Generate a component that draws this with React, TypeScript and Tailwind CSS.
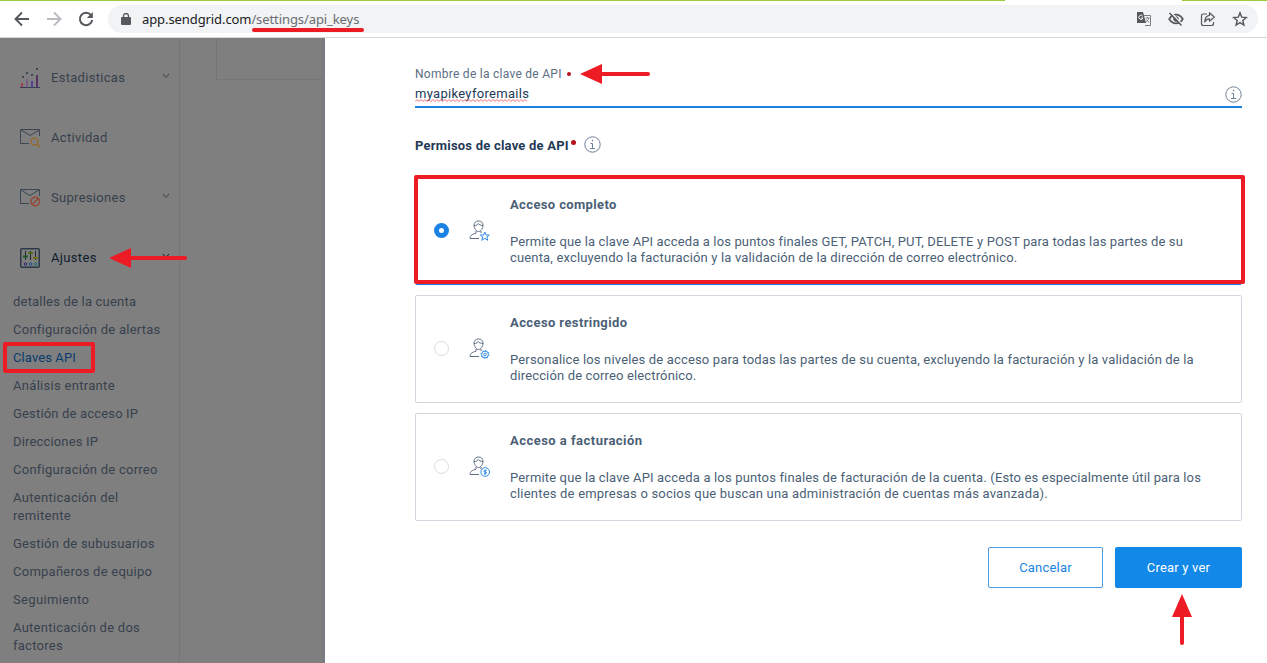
import React from "react";

type LineProps = { text: string; className?: string };

function Line({ text, className = "" }: LineProps) {
  return <span className={`block w-fit whitespace-nowrap ${className}`}>{text}</span>;
}

function Chevron({ dark = false }: { dark?: boolean }) {
  return (
    <svg className="mb-[5px] ml-auto mr-[9px]" width="8" height="6" viewBox="0 0 8 6" fill="none" stroke={dark ? "#0e1d2d" : "#37414d"}>
      <path d="M1 1 4 4.500 7 1" />
    </svg>
  );
}

function StatsIcon() {
  return (
    <svg width="20" height="22" viewBox="0 0 20 22">
      <path d="M0 20.500h20" stroke="#3b3f55" />
      <path d="M2 20v-4" stroke="#9b3f58" strokeWidth="2" />
      <path d="M7 20v-8" stroke="#7a5f86" strokeWidth="2" />
      <path d="M12 20v-6" stroke="#53409b" strokeWidth="2" />
      <path d="M17 20V8" stroke="#553366" strokeWidth="2" />
      <path d="M2 9h2v2H2zM6 5h2v2H6zM11 7h2v2h-2zM16 1h2v2h-2z" fill="#3f4650" />
    </svg>
  );
}

function MailIcon({ kind }: { kind: "search" | "block" }) {
  return (
    <svg width="21" height="20" viewBox="0 0 21 20" fill="none">
      <path d="M9 15.500H.5V1.500h19V8M1 2l9 5.500L19 2" stroke="#3b4653" />
      {kind === "search" ? (
        <g stroke="#96692a" strokeWidth="1.400">
          <circle cx="14.500" cy="13.500" r="3.600" />
          <path d="m17.200 16.200 3 3" />
        </g>
      ) : (
        <g stroke="#994534" strokeWidth="1.400">
          <circle cx="15.300" cy="13.500" r="4.300" />
          <path d="m12.300 16.500 6-6" />
        </g>
      )}
    </svg>
  );
}

function SettingsIcon() {
  return (
    <svg width="20" height="20" viewBox="0 0 20 20" fill="none">
      <rect x=".75" y=".75" width="18.500" height="18.500" rx="1" stroke="#2b3948" strokeWidth="1.500" />
      <path d="M5.500 3v9M10.500 3v9M15.500 3v9" stroke="#1a2733" />
      <path d="M3 8.500h5" stroke="#1d5c24" strokeWidth="2" />
      <path d="M8 5h5" stroke="#4d6a10" strokeWidth="2" />
      <path d="M13 10h5" stroke="#6b7410" strokeWidth="2" />
      <circle cx="5.500" cy="16" r="1.300" stroke="#29246e" />
      <circle cx="10.500" cy="16" r="1.300" stroke="#1d4f86" />
      <circle cx="15.500" cy="16" r="1.300" stroke="#12707a" />
    </svg>
  );
}

function NavRow({ icon, label, chevron, dark, track }: { icon: React.ReactNode; label: string; chevron?: boolean; dark?: boolean; track: string }) {
  return (
    <div className={`flex h-[60px] items-center pl-5 ${dark ? "text-[#0e1d2d]" : "text-[#37414d]"}`}>
      <span className="flex w-[31px] items-center">{icon}</span>
      <Line text={label} className={track} />
      {chevron && <Chevron dark={dark} />}
    </div>
  );
}

const subLinks: { lines: string[]; track: string }[] = [
  { lines: ["detalles de la cuenta"], track: "tracking-[0.2px]" },
  { lines: ["Configuración de alertas"], track: "tracking-[0.25px]" },
  { lines: ["Claves API"], track: "tracking-[0.1px]" },
  { lines: ["Análisis entrante"], track: "tracking-[0.3px]" },
  { lines: ["Gestión de acceso IP"], track: "tracking-[0.17px]" },
  { lines: ["Direcciones IP"], track: "tracking-[0.16px]" },
  { lines: ["Configuración de correo"], track: "tracking-[0.25px]" },
  { lines: ["Autenticación del", "remitente"], track: "tracking-[0.3px]" },
  { lines: ["Gestión de subusuarios"], track: "tracking-[0.25px]" },
  { lines: ["Compañeros de equipo"], track: "tracking-[0.25px]" },
  { lines: ["Seguimiento"], track: "tracking-[0.35px]" },
  { lines: ["Autenticación de dos", "factores"], track: "tracking-[0.26px]" },
];

function Sidebar() {
  return (
    <nav className="h-full w-[180px] shrink-0 border-r border-[#757678] pt-[10px] text-[13px]">
      <NavRow icon={<StatsIcon />} label="Estadisticas" chevron track="tracking-[0.3px]" />
      <NavRow icon={<MailIcon kind="search" />} label="Actividad" track="tracking-[0.3px]" />
      <NavRow icon={<MailIcon kind="block" />} label="Supresiones" chevron track="tracking-[0.3px]" />
      <NavRow icon={<SettingsIcon />} label="Ajustes" chevron dark track="tracking-[0.35px]" />
      <ul className="pl-[13px] text-[#37414d]">
        {subLinks.map((l) => {
          const active = l.lines[0] === "Claves API";
          return (
            <li key={l.lines[0]} className={`relative py-[5px] leading-[18px] ${active ? "text-[#0b3c6e]" : ""}`}>
              {l.lines.map((t) => (
                <Line key={t} text={t} className={l.track} />
              ))}
              {active && <span className="absolute -left-[10px] -top-[2px] h-[31px] w-[92px] rounded-[2px] border-4 border-[#ed1c24]" />}
            </li>
          );
        })}
      </ul>
    </nav>
  );
}

function InfoIcon() {
  return (
    <svg width="17" height="17" viewBox="0 0 17 17" fill="none" stroke="#6d7f95">
      <circle cx="8.500" cy="8.500" r="7.700" />
      <path d="M6.500 7.500h2v5M6 12.500h5" />
      <path d="M8 4.500h1.200" strokeWidth="1.400" />
    </svg>
  );
}

function UserIcon({ badge }: { badge: "star" | "gear" | "coin" }) {
  return (
    <svg width="22" height="22" viewBox="0 0 22 22" fill="none" stroke="#5e6f84">
      <path d="M9.500 1C6.800 1 5 2.700 5 5.300s2 6.200 4.500 6.200S14 8 14 5.300 12.200 1 9.500 1Z" />
      <path d="M5 5.500c2.500.2 3.600-.8 4.200-2 .8 1.300 2.600 1.900 4.800 2M7 11v2.200c-3 .8-6 2-6 5.300h9M12 11v2" />
      {badge === "star" && <path stroke="#2f8be6" d="m15.800 12 1.300 3h3.200l-2.500 2 1 3.300-3-1.900-3 1.900 1-3.300-2.500-2h3.200z" />}
      {badge === "gear" && (
        <g stroke="#2f8be6">
          <circle cx="16" cy="16.500" r="3.400" />
          <circle cx="16" cy="16.500" r="1.300" />
          <circle cx="16" cy="16.500" r="4" strokeDasharray="1.200 1.900" />
        </g>
      )}
      {badge === "coin" && (
        <g stroke="#2f8be6">
          <circle cx="16.200" cy="16" r="4.300" />
          <path d="M17.700 14.500h-2.200c-.8 0-.8 1.500 0 1.500h1.300c.8 0 .8 1.600 0 1.600h-2M16.200 13.500v5.200" />
        </g>
      )}
    </svg>
  );
}

type Option = { title: string; titleTrack: string; badge: "star" | "gear" | "coin"; lines: { t: string; track: string }[] };

const options: Option[] = [
  {
    title: "Acceso completo",
    titleTrack: "tracking-[0.37px]",
    badge: "star",
    lines: [
      { t: "Permite que la clave API acceda a los puntos finales GET, PATCH, PUT, DELETE y POST para todas las partes de su", track: "tracking-[0.137px]" },
      { t: "cuenta, excluyendo la facturación y la validación de la dirección de correo electrónico.", track: "tracking-[0.16px]" },
    ],
  },
  {
    title: "Acceso restringido",
    titleTrack: "tracking-[0.4px]",
    badge: "gear",
    lines: [
      { t: "Personalice los niveles de acceso para todas las partes de su cuenta, excluyendo la facturación y la validación de la", track: "tracking-[0.16px]" },
      { t: "dirección de correo electrónico.", track: "tracking-[0.14px]" },
    ],
  },
  {
    title: "Acceso a facturación",
    titleTrack: "tracking-[0.47px]",
    badge: "coin",
    lines: [
      { t: "Permite que la clave API acceda a los puntos finales de facturación de la cuenta. (Esto es especialmente útil para los", track: "tracking-[0.157px]" },
      { t: "clientes de empresas o socios que buscan una administración de cuentas más avanzada).", track: "tracking-[0.2px]" },
    ],
  },
];

function OptionCard({ option, selected }: { option: Option; selected: boolean }) {
  return (
    <div className={`relative flex h-[108px] items-center rounded-[2px] border pl-[18px] text-[#4b5f76] ${selected ? "border-[#1a82e2]" : "border-[#d3d6de]"}`}>
      {selected ? (
        <span className="mb-px size-[15px] shrink-0 rounded-full border-[5px] border-[#1a82e2] bg-white" />
      ) : (
        <span className="mb-px size-[15px] shrink-0 rounded-full border border-[#d9dce1] bg-white" />
      )}
      <span className="ml-5 w-[41px] shrink-0">
        <UserIcon badge={option.badge} />
      </span>
      <div className="h-full pt-[18px] text-[13px]">
        <Line text={option.title} className={`mb-[20px] font-bold leading-[18px] ${option.titleTrack}`} />
        {option.lines.map((l) => (
          <Line key={l.t} text={l.t} className={`leading-4 ${l.track}`} />
        ))}
      </div>
      {selected && <span className="absolute -left-[2px] -top-[3px] h-[109px] w-[831px] rounded-[2px] border-4 border-[#ed1c24]" />}
    </div>
  );
}

function Arrow({ className, w }: { className: string; w: number }) {
  return (
    <svg className={`absolute ${className}`} width={w} height="20" viewBox={`0 0 ${w} 20`}>
      <path d="M0 10 22 0v20z" fill="#ed1c24" />
      <path d={`M20 10H${w - 2}`} stroke="#ed1c24" strokeWidth="4" strokeLinecap="round" />
    </svg>
  );
}

function BrowserBar() {
  return (
    <header className="relative flex h-[38px] shrink-0 items-center border-b border-[#d5d7da] bg-white">
      <div className="absolute inset-x-0 top-0 flex h-px justify-between">
        <span className="w-[1005px] bg-[#9acb3c]" />
        <span className="w-[85px] bg-[#9acb3c]" />
      </div>
      <div className="flex items-center pl-[14px]">
        <svg width="16" height="16" viewBox="0 0 16 16" fill="none" stroke="#54575c" strokeWidth="1.900">
          <path d="M15 8H2M8 1.500 1.500 8 8 14.500" />
        </svg>
        <svg className="ml-4" width="16" height="16" viewBox="0 0 16 16" fill="none" stroke="#b9bbbe" strokeWidth="1.900">
          <path d="M1 8h13M8 1.500 14.500 8 8 14.500" />
        </svg>
        <svg className="ml-4" width="16" height="16" viewBox="0 0 16 16" fill="none" stroke="#54575c" strokeWidth="2">
          <path d="M13 4.200A6.200 6.200 0 1 0 14.200 9" />
          <path d="M14.800 1v6H8.800z" fill="#54575c" stroke="none" />
        </svg>
      </div>
      <div className="ml-[14px] flex h-7 w-[1150px] items-center rounded-full bg-[#f1f3f4] pl-[13px] pr-[10px]">
        <svg width="10" height="12" viewBox="0 0 10 12">
          <path d="M1 4h8a1 1 0 0 1 1 1v6a1 1 0 0 1-1 1H1a1 1 0 0 1-1-1V5a1 1 0 0 1 1-1Z" fill="#54575c" />
          <path d="M2.500 5V3a2.500 2.500 0 0 1 5 0v2" fill="none" stroke="#54575c" strokeWidth="1.300" />
        </svg>
        <div className="ml-[11px] flex pt-px font-['Noto_Sans','Open_Sans',sans-serif] text-[13px] leading-5 tracking-[-0.09px]">
          <Line text="app.sendgrid.com" className="text-[#202124]" />
          <Line text="/settings/api_keys" className="text-[#6a6d72]" />
        </div>
        <div className="ml-auto flex items-center gap-4">
          <svg width="16" height="16" viewBox="0 0 16 16">
            <path d="M6 4.500h8.500v10H9" fill="none" stroke="#7b7e83" />
            <path d="M1 1h6l3 11H1z" fill="#54575c" />
            <path d="M6.800 5.200A2.100 2.100 0 1 0 7 7H5" fill="none" stroke="#fff" />
            <path d="M9.500 7h4M11.500 6v1M12.800 7c-.5 2-1.500 3-3 4M10.500 8.500l2.500 3" fill="none" stroke="#7b7e83" strokeWidth=".9" />
          </svg>
          <svg width="16" height="16" viewBox="0 0 16 16" fill="none" stroke="#54575c">
            <path d="M1.200 8C3 5 5.300 3.700 8 3.700S13 5 14.800 8C13 11 10.700 12.300 8 12.300S3 11 1.200 8Z" strokeWidth="1.700" />
            <circle cx="8" cy="8" r="2.300" fill="#54575c" />
            <path d="m2.700 1 11.800 13" stroke="#f1f3f4" strokeWidth="1.500" />
            <path d="m1.500 2 12 12.500" strokeWidth="1.500" />
          </svg>
          <svg width="16" height="16" viewBox="0 0 16 16" fill="none" stroke="#54575c" strokeWidth="1.200">
            <path d="M7 3H3.500Q1.500 3 1.500 5v7.500q0 2 2 2h8q2 0 2-2V11" />
            <path d="M9.500 1.800 14.300 6l-4.800 4.200V7.800C7 7.800 5.700 8.800 4.700 11c.2-3.500 1.800-6.200 4.800-6.600z" strokeLinejoin="round" />
          </svg>
          <svg width="16" height="16" viewBox="0 0 16 16" fill="none" stroke="#54575c" strokeWidth="1.400">
            <path d="m8 1.800 1.700 4.300 4.600.4-3.500 3 1.100 4.500L8 11.600 4.100 14l1.100-4.500-3.500-3 4.600-.4z" />
          </svg>
        </div>
      </div>
      <span className="absolute left-[252px] top-7 h-[4px] w-[112px] rounded-full bg-[#ed1c24]" />
    </header>
  );
}

const squiggle = "M0 2.500" + Array.from({ length: 28 }, () => "l2-2l2 2").join("");

function KeyForm() {
  return (
    <main className="relative flex w-[942px] shrink-0 flex-col bg-white pl-[90px] pr-[25px] pt-[27px]">
      <div className="flex items-center text-[12px] leading-[18px] text-[#5b6e84]">
        <Line text="Nombre de la clave de API" className="tracking-[0.27px]" />
        <span className="ml-[5px] size-1 rounded-full bg-[#b5121b]" />
      </div>
      <div className="flex h-[25px] items-start justify-between border-b-2 border-[#1a82e2]">
        <div className="relative pt-px">
          <Line text="myapikeyforemails" className="text-[13px] leading-[20px] tracking-[0.3px] text-[#1f3a56]" />
          <svg className="absolute left-0 top-[16px]" width="114" height="3" viewBox="0 0 114 3" fill="none" stroke="#ef5a62" strokeWidth="0.900">
            <path d={squiggle} />
          </svg>
        </div>
        <span className="mt-[3px]">
          <InfoIcon />
        </span>
      </div>
      <div className="mt-7 flex h-[18px] items-center">
        <Line text="Permisos de clave de API" className="pt-[2px] text-[13px] font-bold leading-[18px] tracking-[0.22px] text-[#1f3a56]" />
        <span className="mb-[6px] ml-[2px] size-[5px] rounded-full bg-[#b5121b]" />
        <span className="mb-[2px] ml-2">
          <InfoIcon />
        </span>
      </div>
      <div className="mt-[23px] flex flex-col gap-[10px]">
        {options.map((o, i) => (
          <OptionCard key={o.title} option={o} selected={i === 0} />
        ))}
      </div>
      <div className="mt-[26px] flex justify-end gap-3 text-[13px]">
        <button className="flex h-[41px] w-[115px] items-center justify-center rounded-[2px] border border-[#4a9be8] text-[#1a82e2]">
          <Line text="Cancelar" className="tracking-[0.2px]" />
        </button>
        <button className="flex h-[41px] w-[127px] items-center justify-center rounded-[2px] bg-[#1288e8] text-white">
          <Line text="Crear y ver" className="tracking-[0.2px]" />
        </button>
      </div>
    </main>
  );
}

export default function App() {
  return (
    <div className="relative flex h-[663px] w-[1267px] flex-col overflow-hidden bg-white font-[Roboto,Inter,sans-serif]">
      <BrowserBar />
      <div className="flex min-h-0 flex-1">
        <aside className="flex w-[325px] shrink-0 bg-[#7f7f7f]">
          <Sidebar />
          <div className="ml-9 h-[42px] flex-1 rounded-bl-[2px] border-b border-l border-[#737578]" />
          <div className="-ml-[3px] w-[3px] bg-[#797b80]" />
        </aside>
        <KeyForm />
      </div>
      <Arrow className="left-[109px] top-[248px]" w={78} />
      <Arrow className="left-[580px] top-[64px]" w={70} />
      <svg className="absolute left-[1172px] top-[594px]" width="20" height="51" viewBox="0 0 20 51">
        <path d="M10 0 20 23H0z" fill="#ed1c24" />
        <path d="M10 21v28" stroke="#ed1c24" strokeWidth="4" strokeLinecap="round" />
      </svg>
    </div>
  );
}
